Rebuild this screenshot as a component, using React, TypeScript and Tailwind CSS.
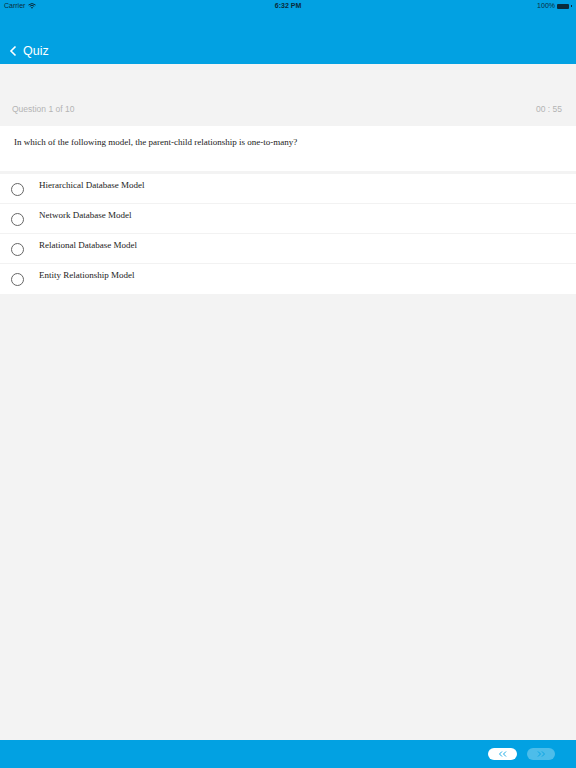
import React from "react";

const options = [
  "Hierarchical Database Model",
  "Network Database Model",
  "Relational Database Model",
  "Entity Relationship Model",
];

export default function App() {
  return (
    <div className="w-[576px] h-[768px] flex flex-col bg-[#f3f3f3] font-['Liberation_Sans',sans-serif]">
      {/* header */}
      <div className="h-[64px] bg-[#02a1e2] flex flex-col">
        <div className="h-[12px] flex items-center justify-between px-[4px] text-[7px] text-[#0b2b3a]">
          <div className="flex items-center gap-[3px] w-[80px]">
            <span>Carrier</span>
            <svg width="8" height="6" viewBox="0 0 8 6">
              <path d="M0.5 2 Q4 -1 7.5 2" stroke="#0b2b3a" strokeWidth="1" fill="none" />
              <path d="M1.8 3.3 Q4 1.3 6.2 3.3" stroke="#0b2b3a" strokeWidth="1" fill="none" />
              <path d="M4 5.8 L2.9 4.5 Q4 3.6 5.1 4.5 Z" fill="#0b2b3a" />
            </svg>
          </div>
          <span className="font-bold">6:32 PM</span>
          <div className="flex items-center justify-end gap-[2px] w-[80px]">
            <span>100%</span>
            <div className="w-[12px] h-[5px] bg-[#0b2b3a] rounded-[1px]" />
            <div className="w-[1px] h-[2px] bg-[#0b2b3a]" />
          </div>
        </div>
        <div className="flex-1 flex items-center pl-[9px] pt-[26px] text-white">
          <svg width="9" height="12" viewBox="0 0 9 12" className="mr-[5px]">
            <path d="M6.5 1.5 L2 6 L6.5 10.5" stroke="white" strokeWidth="1.6" fill="none" />
          </svg>
          <span className="text-[12.5px] leading-none">Quiz</span>
        </div>
      </div>

      {/* question info */}
      <div className="h-[62px] flex items-center justify-between px-[12px] pt-[28px] text-[8.5px] text-[#b3b3b3]">
        <span>Question 1 of 10</span>
        <span className="pr-[2px]">00 : 55</span>
      </div>

      <div className="h-[45px] bg-white px-[14px] pt-[10px] text-[9px] text-[#222] font-['Liberation_Serif',serif]">
        In which of the following model, the parent-child relationship is one-to-many?
      </div>

      <div className="h-[3px]" />

      <div className="bg-white flex flex-col">
        {options.map((o, i) => (
          <div
            key={o}
            className={
              "h-[30px] flex items-start pl-[11px] " +
              (i < options.length - 1 ? "border-b border-[#f2f2f2]" : "")
            }
          >
            <div className="mt-[9px] w-[13px] h-[13px] rounded-full border border-[#666]" />
            <span className="ml-[15px] mt-[5px] text-[9px] text-[#222] font-['Liberation_Serif',serif]">
              {o}
            </span>
          </div>
        ))}
      </div>

      <div className="flex-1" />

      {/* footer */}
      <div className="h-[28px] bg-[#02a1e2] flex items-center justify-end gap-[10px] pr-[21px]">
        <div className="w-[29px] h-[12px] rounded-full bg-white flex items-center justify-center">
          <svg width="10" height="6" viewBox="0 0 10 6">
            <path d="M4 0.5 L1.5 3 L4 5.5 M8 0.5 L5.5 3 L8 5.5" stroke="#02a1e2" strokeWidth="0.9" fill="none" />
          </svg>
        </div>
        <div className="w-[28px] h-[12px] rounded-full bg-[#4dbdea] flex items-center justify-center">
          <svg width="10" height="6" viewBox="0 0 10 6">
            <path d="M2 0.5 L4.5 3 L2 5.5 M6 0.5 L8.5 3 L6 5.5" stroke="#02a1e2" strokeWidth="0.9" fill="none" />
          </svg>
        </div>
      </div>
    </div>
  );
}
